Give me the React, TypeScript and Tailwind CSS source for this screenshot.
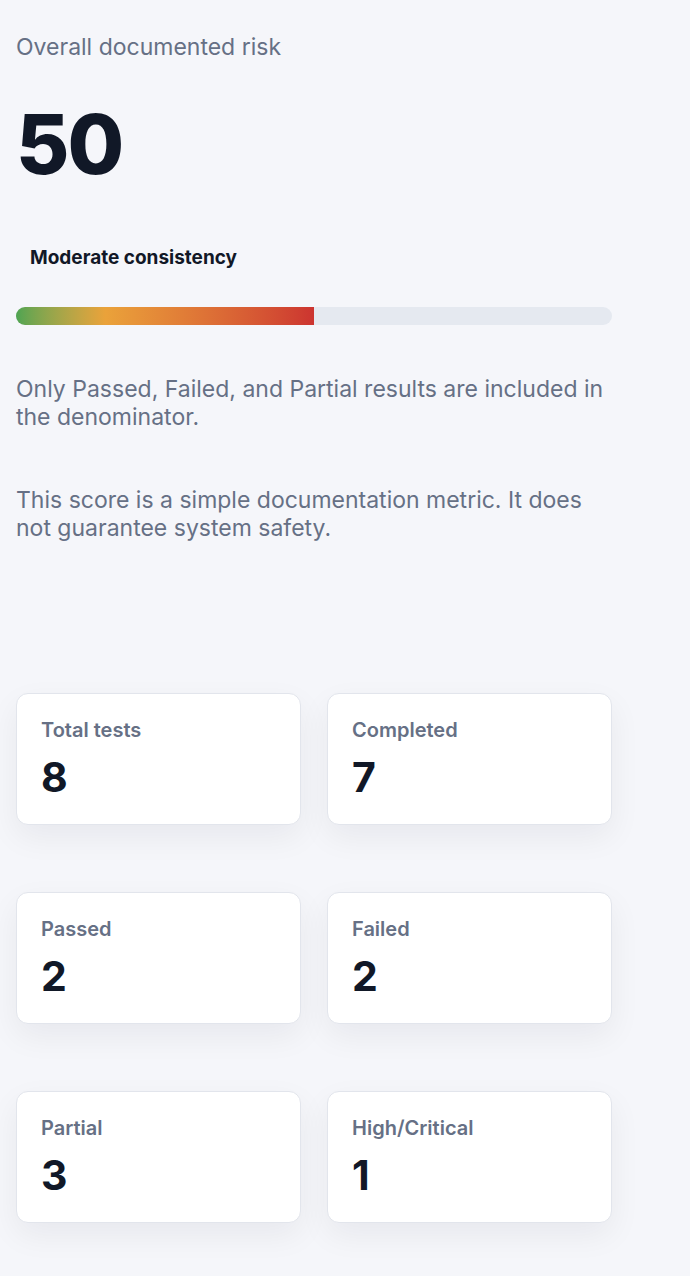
const stats = [
  { label: 'Total tests', value: 8 },
  { label: 'Completed', value: 7 },
  { label: 'Passed', value: 2 },
  { label: 'Failed', value: 2 },
  { label: 'Partial', value: 3 },
  { label: 'High/Critical', value: 1 },
];

const score = 50;

export default function App() {
  return (
    <div className="min-h-screen bg-[#f5f6fa] font-['Inter',sans-serif] text-[#111827]">
      <div className="w-[596px] ml-4 pt-[33px]">
        {/* score summary */}
        <p className="text-[23px] leading-7 text-[#667085]">Overall documented risk</p>
        <div className="mt-[43px] text-[82px] leading-none font-extrabold tracking-tight">{score}</div>
        <div className="mt-[60px] px-3.5 text-[19px] font-bold leading-6">Moderate consistency</div>
        <div className="mt-[37px] h-[18px] rounded-full bg-[#e5e9f0] overflow-hidden">
          <div
            className="h-full bg-gradient-to-r from-[#4ea452] via-[#eaa23a] via-30% to-[#cc3430]"
            style={{ width: `${score}%` }}
          />
        </div>

        <p className="mt-[50px] text-[23px] leading-7 text-[#667085]">
          Only Passed, Failed, and Partial results are included in the denominator.
        </p>
        <p className="mt-[55px] text-[23px] leading-7 text-[#667085]">
          This score is a simple documentation metric. It does not guarantee system safety.
        </p>

        {/* counts */}
        <div className="mt-[151px] grid grid-cols-2 gap-x-[26px] gap-y-[67px] pb-[53px]">
          {stats.map(({ label, value }) => (
            <div
              key={label}
              className="h-[132px] rounded-xl border border-[#e2e5ec] bg-white px-6 pt-[22px] shadow-[0_12px_32px_rgba(15,23,42,0.06)]"
            >
              <div className="text-[20px] font-semibold leading-7 text-[#667085]">{label}</div>
              <div className="mt-[13px] text-[41px] font-bold leading-none">{value}</div>
            </div>
          ))}
        </div>
      </div>
    </div>
  );
}
